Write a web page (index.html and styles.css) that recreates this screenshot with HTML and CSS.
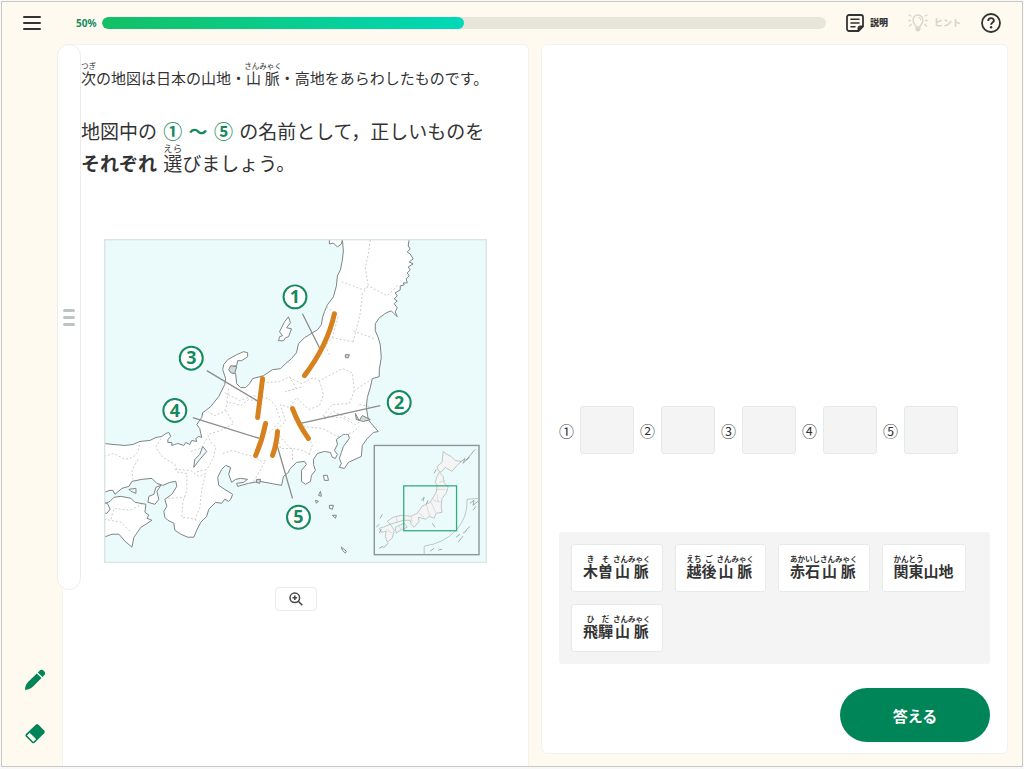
FILE: index.html
```html
<!DOCTYPE html>
<html lang="ja">
<head>
<meta charset="utf-8">
<meta name="viewport" content="width=device-width, initial-scale=1">
<title>日本の山地・山脈・高地</title>
<link rel="stylesheet" href="styles.css">
</head>
<body>
<div class="app">
  <header class="topbar">
    <button class="icon-button menu" type="button" aria-label="メニュー">
      <svg width="18" height="16" viewBox="0 0 18 16"><path d="M1 2h16M1 8h16M1 14h16" fill="none" stroke="#333" stroke-width="2" stroke-linecap="round"/></svg>
    </button>
    <div class="progress">
      <span class="progress-value" id="progress-label">50%</span>
      <div class="progress-track" role="progressbar" aria-labelledby="progress-label" aria-valuenow="50" aria-valuemin="0" aria-valuemax="100">
        <div class="progress-fill" style="width:50%"></div>
      </div>
    </div>
    <div class="tools">
      <button class="icon-button" type="button">
        <svg width="18" height="18" viewBox="0 0 18 18"><path d="M3 1h12a2 2 0 0 1 2 2v9.500l-4.500 4.500H3a2 2 0 0 1-2-2V3a2 2 0 0 1 2-2z" fill="none" stroke="#333" stroke-width="1.800"/><path d="M17 12v1l-4 4h-1v-3a2 2 0 0 1 2-2z" fill="#333" stroke="#333"/><path d="M5 5.300h8M5 9h8M5 12.700h4" stroke="#333" stroke-width="1.600" stroke-linecap="round"/></svg>
        <span>説明</span>
      </button>
      <button class="icon-button hint" type="button" disabled>
        <svg width="20" height="18" viewBox="0 0 20 18"><g fill="none" stroke="currentColor" stroke-width="1.300" stroke-linecap="round"><path d="M8 13c0-2-3-3-3-7a5 5 0 0 1 10 0c0 4-3 5-3 7zM3 2 1 1M2.500 6.500H.8M3.200 10.500 1.500 12M17 2l2-1M17.500 6.500h1.700M16.800 10.500l1.700 1.500M11 3.500c1 .4 1.600 1.100 1.800 2"/></g><path d="M7.500 14h5v1.500L11 17.500H9l-1.500-2z" fill="currentColor"/></svg>
        <span>ヒント</span>
      </button>
      <button class="icon-button help" type="button" aria-label="ヘルプ">
        <svg width="20" height="20" viewBox="0 0 20 20" fill="none" stroke="#333"><circle cx="10" cy="10" r="9" stroke-width="1.800"/><path d="M7.200 8c0-3.800 5.700-3.800 5.700-.5 0 2-2.800 2-2.800 4.200" stroke-width="1.900"/><circle cx="10.100" cy="14.300" r="1.200" fill="#333" stroke="none"/></svg>
      </button>
    </div>
  </header>

  <nav class="side" aria-label="書きこみ">
    <button class="icon-button" type="button" aria-label="ペン">
      <svg width="22" height="22" viewBox="0 0 22 22" fill="#008558"><path d="M1 21c.2-4 1.300-6.200 3.500-8.400l8.300-8.200 4.700 4.700-8.200 8.200C7 19.500 4.800 20.800 1 21zM13.800 3.400l1.500-1.500a3.200 3.200 0 0 1 4.700 4.700L18.500 8.100z"/></svg>
    </button>
    <button class="icon-button" type="button" aria-label="消しゴム">
      <svg width="22" height="22" viewBox="0 0 22 22"><path d="M11.800 1.700a2 2 0 0 1 2.700 0l5.700 5.800a2 2 0 0 1 0 2.700l-9.500 9.500a2 2 0 0 1-2.700 0L1.900 13.600a2 2 0 0 1 0-2.700z" fill="#008558"/><path d="M5.600 10.300 3.500 12.500l5.800 5.900 2.300-2.400z" fill="#fff9ee" stroke="#fff9ee" stroke-width="1" stroke-linejoin="round"/></svg>
    </button>
  </nav>

  <main class="panel question">
    <div class="drag-handle" aria-hidden="true"><i></i><i></i><i></i></div>
    <p class="lead"><ruby>次<rt>つぎ</rt></ruby>の地図は日本の山地・<ruby>山脈<rt>さんみゃく</rt></ruby>・高地をあらわしたものです。</p>
    <p class="prompt">地図中の <b class="mark">① <span>〜</span> ⑤</b> の名前として，正しいものを<br><b>それぞれ</b> <ruby>選<rt>えら</rt></ruby>びましょう。</p>
    <figure class="figure">
      <svg class="map" viewBox="104 239 384 325" role="img" aria-label="中部地方を中心とした日本地図">
        <rect x="104" y="239" width="384" height="325" fill="#ebfbfb"/>
        <g class="land">
          <path d="M343 239 344 251 343 260 341 270 338 276 337 286 334 297 328 305 325 312 323 318 322 325 318 330 313 333 305 338 299 344 297 353 292 359 286 364 281 369 273 370 264 376 253 379 250 384 246 388 241 388 237 384 236 374 232 371 231 367 237 366 238 361 242 361 248 357 248 353 244 352 237 355 228 360 224 365 223 370 226 379 225 385 219 397 211 407 206 411 203 413 202 418 197 425 200 429 201 434 202 438 199 437 196 439 197 442 192 441 190 445 186 443 184 446 178 444 175 445 172 446 172 443 168 443 168 440 171 437 169 433 166 434 162 437 156 438 150 441 140 442 133 445 125 446 113 445 104 444V493L110 491 113 491 115 495 122 489 129 487 132 482 142 480 152 479 157 484 163 486 170 483 176 482 177 487 172 495 165 500 167 507 164 512 165 518 168 521 174 524 175 531 181 535 188 538 194 538 197 531 201 523 207 517 209 510 216 503 222 504 225 500 229 502 231 500 233 495 225 490 219 486 218 478 222 470 226 466 231 468 229 475 232 483 236 480 241 479 248 480 244 483 237 484 238 487 249 484 260 482 271 484 282 486 284 477 289 473 290 470 297 463 305 462 307 465 302 471 302 482 306 485 311 482 312 476 316 471 314 465 314 460 318 454 325 452 331 453 333 458 336 459 338 455 335 451 338 445 337 440 344 435 349 435 350 439 344 447 342 453 340 459 342 464 340 468 345 469 349 463 362 457 363 446 368 439 374 433 379 432 372 424 369 420 367 408 368 398 371 388 373 379 380 377 380 370 382 358 381 345 379 338 376 331 376 324 380 318 387 313 392 311 395 314 398 317 396 312 398 308 395 304 398 301 395 299 398 296 396 293 401 290 401 286 405 285 404 283 408 283 407 279 410 276 408 273 411 270 409 267 414 264 410 262 414 259 411 254 408 252 411 249 409 246 410 239Z"/>
          <path d="M330 239V244L334 243 338 247 342 244 343 239M104 505 110 502 114 498 121 497 131 499 135 503 146 505 145 513 149 516 147 519 152 521 146 525 141 528 134 538 132 548 125 542 119 535 112 535 104 538ZM104 502 108 505 110 510 107 514 104 514ZM161 486 157 492 159 500 155 505 148 503 149 497 154 495 156 488ZM129 490 136 489 136 494 131 492ZM289 317 291 323 287 328 292 329 289 337 286 338 284 341 279 341 280 337 283 336 280 332 285 322ZM324 476 328 476 329 481 325 481ZM321 492 322 497 319 496ZM316 501 319 502 317 504ZM330 506 334 506 333 510 330 509ZM333 516 337 516 336 519ZM342 548 347 552 346 554 343 551Z"/>
          <path class="water" d="M231 366 237 367 235 374 231 373 229 370ZM257 480 261 480 260 484 257 483ZM356 414 360 421 363 416 371 420 364 422 357 420ZM346 355 350 355 349 358 346 358Z"/>
        </g>
        <path class="lake" d="M203 447 207 452 200 460 194 468 195 460 200 455Z"/>
        <g class="borders">
          <path d="M371 240 369 254 366 268 369 286 363 294 361 313 354 342M342 282 364 290 369 286 388 296 399 285M354 331 375 339M354 342 333 338 326 346 330 355M327 307 339 316 333 338M290 378 302 384 314 378 320 381 343 369 353 373 355 391 373 379M267 383 280 382 290 377 297 389 286 392 304 387M320 381 324 395 320 406 309 410 297 398 290 408 281 405 286 422 276 431M355 391 350 404 333 405 323 417 342 418 356 425 367 419M225 393 240 401 254 396 269 399 276 406 281 421 270 433M229 389 227 402 241 406 249 400 262 402M228 402 225 412 215 416 208 412M226 411 234 424 221 431 208 435 211 443 216 447 214 458 207 470 195 473M223 454 233 451 245 455 254 457 262 462 266 461 260 472 254 482M276 431 281 449 293 449 293 461M277 433 291 449 301 450 310 455M310 455 313 445 307 436 303 427 314 428 323 429 338 437 353 433 360 427M104 457 114 454 125 460 133 458 138 452 140 443M138 460 132 471 133 480M161 439 156 448 163 458 175 465 178 473 187 474 187 491 183 503 182 518 191 519 200 522M175 470 191 471 199 477 206 474 202 490 200 509 195 520M168 499 185 498M191 452 201 449 208 438M104 520 121 523 132 534M111 520 114 509 130 511 142 505M360 405 370 407M325 420 334 412 351 420"/>
        </g>
        <g class="leaders"><path d="M303 314 321 350M381 406 300 424M207 371 259 402M193 418 260 439M277 444 293 499"/></g>
        <g class="ranges"><path d="M335 314Q328 346 305 376M293 409Q299 425 309 439M263 379 258 418M266 424Q263 440 256 456M278 432Q277 445 273 456"/></g>
        <g class="numbers">
          <g class="rings"><circle cx="295.500" cy="297" r="11.500"/><circle cx="400" cy="403" r="11.500"/><circle cx="191.500" cy="358.500" r="11.500"/><circle cx="175" cy="411" r="11.500"/><circle cx="299" cy="518" r="11.500"/></g>
          <text x="295.500" y="303">1</text><text x="400" y="409">2</text><text x="191.500" y="364.500">3</text><text x="175" y="417">4</text><text x="299" y="524">5</text>
        </g>
        <rect x="375" y="446" width="105" height="109.500" fill="#ebfbfb" stroke="#8d9696" stroke-width="1.400"/>
        <g class="mini-land">
          <path d="M444 452 448 455 452 457 456 461 462 462 458 466 453 472 446 468 442 473 439 471 438 467 443 463ZM438 477 440 473 444 477 445 483 449 488 447 494 443 499 442 507 443 513 437 514 435 519 430 517 427 520 419 518 420 522 415 528 412 525 411 521 404 521 398 523 391 525 388 522 394 518 402 516 412 517 418 514 423 507 431 503 437 493 438 486 436 483ZM384 528 391 525 395 531 393 539 388 543 386 537 387 532 382 533 380 529ZM396 528 405 524 408 528 401 531 397 534Z"/>
          <path class="specks" d="M461 463 466 459 464 464 470 458 467 461 476 450M422 501 425 498 424 502M427 505 429 501M381 519 383 515M380 525 377 528M382 530 380 534M433 524 436 528M380 549 384 547M389 544 384 549M431 552 435 549M439 551 443 550M457 538 461 535M459 543 464 537M467 531 471 527M464 534 468 531M471 504 475 501 474 506 479 502M474 511 477 507M437 470 435 474"/>
          <path class="prefectures" d="M440 483 446 481M438 490 446 490M434 501 442 503M427 505 431 518M420 514 425 518M412 517 413 523M432 503 437 514M438 495 439 502M404 516 405 521M397 518 398 523M387 530 393 534M400 527 402 531"/>
          <path class="route" d="M425 555V547Q445 544 457 531T468 500L480 499"/>
        </g>
        <rect x="404.500" y="486.500" width="53" height="45" fill="none" stroke="#35ad7b" stroke-width="1.300"/>
        <rect x="104.700" y="239.700" width="382.600" height="323.600" fill="none" stroke="#dae5e3" stroke-width="1.400"/>
      </svg>
      <button class="zoom" type="button" aria-label="地図を拡大">
        <svg width="14" height="14" viewBox="0 0 14 14" fill="none" stroke="#484848"><circle cx="5.800" cy="5.800" r="4.800" stroke-width="1.500"/><path d="m9.300 9.300 4 4M3.500 5.800h4.600M5.800 3.500v4.600" stroke-width="1.600"/></svg>
      </button>
    </figure>
  </main>

  <section class="panel answer" aria-label="解答">
    <div class="slots">
      <div class="slot-item"><span id="n1">①</span><button class="slot" type="button" aria-labelledby="n1"></button></div>
      <div class="slot-item"><span id="n2">②</span><button class="slot" type="button" aria-labelledby="n2"></button></div>
      <div class="slot-item"><span id="n3">③</span><button class="slot" type="button" aria-labelledby="n3"></button></div>
      <div class="slot-item"><span id="n4">④</span><button class="slot" type="button" aria-labelledby="n4"></button></div>
      <div class="slot-item"><span id="n5">⑤</span><button class="slot" type="button" aria-labelledby="n5"></button></div>
    </div>
    <div class="choices">
      <button class="choice" type="button"><ruby>木<rt>き</rt></ruby><ruby>曽<rt>そ</rt></ruby><ruby>山脈<rt>さんみゃく</rt></ruby></button>
      <button class="choice" type="button"><ruby>越<rt>えち</rt></ruby><ruby>後<rt>ご</rt></ruby><ruby>山脈<rt>さんみゃく</rt></ruby></button>
      <button class="choice" type="button"><ruby>赤石<rt>あかいし</rt></ruby><ruby>山脈<rt>さんみゃく</rt></ruby></button>
      <button class="choice" type="button"><ruby>関東<rt>かんとう</rt></ruby>山地</button>
      <button class="choice" type="button"><ruby>飛<rt>ひ</rt></ruby><ruby>驒<rt>だ</rt></ruby><ruby>山脈<rt>さんみゃく</rt></ruby></button>
    </div>
    <button class="submit" type="button">答える</button>
  </section>
</div>
</body>
</html>
```
FILE: styles.css
```css
* { box-sizing: border-box; }

body {
  margin: 0;
  padding: 1px 1px 2px;
  background: #f8f8f8;
  color: #333;
  font-family: "Noto Sans CJK JP", "Noto Sans", sans-serif;
}

button {
  margin: 0;
  padding: 0;
  border: 0;
  background: none;
  color: inherit;
  font: inherit;
}

svg { display: block; flex: none; }
p, figure { margin: 0; }
rt { font-size: 50%; line-height: 1; }

.app {
  display: grid;
  grid-template-columns: 60px minmax(0, 1fr) minmax(0, 1fr);
  grid-template-rows: 42px 1fr;
  min-height: calc(100vh - 3px);
  padding-right: 14px;
  border: 1px solid #c8c8c8;
  background: #fffaef;
}

/* Top bar */
.topbar {
  grid-column: 1 / -1;
  display: flex;
  align-items: center;
  padding: 0 7px 0 21px;
}

.icon-button {
  display: flex;
  align-items: center;
  gap: 6px;
  font-size: 9px;
  font-weight: 900;
  line-height: 12px;
}

.menu { margin-right: 35px; }
.hint { color: #d8d6cb; }

.progress {
  flex: 1;
  display: flex;
  align-items: center;
  gap: 6px;
}

.progress-value {
  width: 20px;
  color: #148b5e;
  font: 700 10px/12px "Noto Sans", sans-serif;
}

.progress-track {
  flex: 1;
  height: 12px;
  border-radius: 6px;
  background: #e8e6da;
  overflow: hidden;
}

.progress-fill {
  height: 100%;
  border-radius: 6px;
  background: linear-gradient(90deg, #13c064, #00d9b8);
}

.tools {
  display: flex;
  align-items: center;
  gap: 20px;
  margin-left: 20px;
}

/* Side tools */
.side {
  display: flex;
  flex-direction: column;
  align-items: center;
  justify-content: flex-end;
  gap: 32px;
  padding: 0 0 21px 6px;
}

/* Panels */
.panel {
  position: relative;
  border: 1px solid #f2f3ef;
  background: #fff;
}

.question {
  margin-right: 6px;
  padding: 16px 18px 40px;
  border-bottom: 0;
  border-radius: 6px 6px 0 0;
}

.answer {
  display: flex;
  flex-direction: column;
  justify-content: flex-end;
  margin: 0 0 12px 6px;
  padding: 18px 17px 11px;
  border-radius: 6px;
}

.drag-handle {
  position: absolute;
  top: -1px;
  left: -6px;
  display: flex;
  flex-direction: column;
  align-items: center;
  justify-content: center;
  gap: 4px;
  width: 24px;
  height: 546px;
  border: 1px solid #ededed;
  border-radius: 12px;
  background: #fff;
}

.drag-handle i {
  width: 12px;
  height: 3px;
  border-radius: 2px;
  background: #bfc4c4;
}

.lead {
  font-size: 15px;
  line-height: 34px;
}

.prompt {
  margin-top: 20px;
  font-size: 19px;
  line-height: 32px;
}

.prompt b { margin-right: 2px; }
.prompt .mark { margin-left: 2px; color: #148b5e; }
.mark span { margin: 0 2px; }

.figure {
  display: flex;
  flex-direction: column;
  align-items: center;
  gap: 24px;
  margin-top: 60px;
  padding: 0 23px;
}

/* Map */
.map { width: 100%; height: auto; }
.land { fill: #fff; stroke: #7b8484; stroke-width: 1; stroke-linejoin: round; }
.water { fill: #d3dada; }
.lake { fill: #ebfbfb; stroke: #7b8484; }
.borders { fill: none; stroke: #c9cccc; stroke-dasharray: 2 2; }
.leaders { fill: none; stroke: #8c8c8c; stroke-width: 1.3; }
.ranges { fill: none; stroke: #d6811d; stroke-width: 5; stroke-linecap: round; }
.numbers { fill: #148b5e; font: 700 18px "Noto Sans", sans-serif; text-anchor: middle; }
.rings { fill: #fff; stroke: #148b5e; stroke-width: 2; }
.mini-land { fill: #f5f5f5; stroke: #b4baba; stroke-width: 0.8; }
.specks { fill: none; stroke: #8f9696; }
.prefectures { fill: none; stroke: #d2d6d6; }
.route { fill: none; }

.zoom {
  display: flex;
  align-items: center;
  justify-content: center;
  width: 42px;
  height: 24px;
  border: 1px solid #e8ecec;
  border-radius: 4px;
  background: #fff;
}

/* Answer area */
.slots {
  display: flex;
  flex-wrap: wrap;
  gap: 6px;
  font-size: 15px;
}

.slot-item {
  display: flex;
  align-items: center;
  gap: 6px;
}

.slot {
  width: 54px;
  height: 48px;
  border: 1px solid #e4eae8;
  border-radius: 3px;
  background: #f4f4f4;
}

.choices {
  display: flex;
  flex-wrap: wrap;
  gap: 12px;
  margin-top: 78px;
  padding: 12px;
  border-radius: 3px;
  background: #f4f4f4;
}

.choice {
  height: 48px;
  padding: 6px 11px 0;
  border: 1px solid #e6ebea;
  border-radius: 3px;
  background: #fff;
  font-size: 15px;
  font-weight: 700;
  line-height: 26px;
}

.submit {
  align-self: flex-end;
  width: 150px;
  height: 54px;
  margin-top: 24px;
  border-radius: 27px;
  background: #008558;
  color: #fff;
  font-size: 15px;
  font-weight: 700;
}
```
